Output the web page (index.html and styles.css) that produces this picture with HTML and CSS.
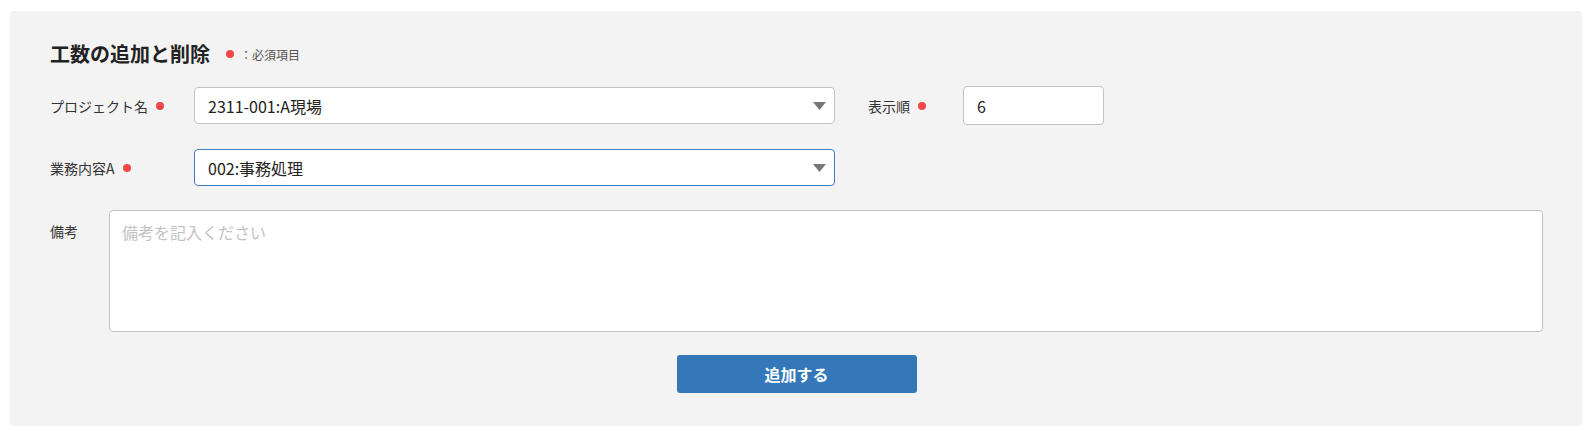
FILE: index.html
```html
<!DOCTYPE html>
<html lang="ja">
<head>
<meta charset="utf-8">
<title>工数の追加と削除</title>
<link rel="stylesheet" href="styles.css">
</head>
<body>
<section class="panel">
  <div class="title-row">
    <h2 class="title">工数の追加と削除</h2>
    <span class="dot dot-title"></span>
    <span class="legend">：必須項目</span>
  </div>

  <div class="row row-1">
    <label class="label label-main">プロジェクト名<span class="dot"></span></label>
    <div class="select-wrap">
      <select class="select">
        <option>2311-001:A現場</option>
      </select>
      <svg class="arrow" width="13" height="8" viewBox="0 0 13 8"><polygon points="0,0 13,0 6.5,8" fill="#777"/></svg>
    </div>
    <label class="label label-order">表示順<span class="dot"></span></label>
    <input class="input" type="text" value="6">
  </div>

  <div class="row row-2">
    <label class="label label-main">業務内容A<span class="dot"></span></label>
    <div class="select-wrap">
      <select class="select select-focus">
        <option>002:事務処理</option>
      </select>
      <svg class="arrow" width="13" height="8" viewBox="0 0 13 8"><polygon points="0,0 13,0 6.5,8" fill="#777"/></svg>
    </div>
  </div>

  <div class="row row-3">
    <label class="label label-note">備考</label>
    <textarea class="textarea" placeholder="備考を記入ください"></textarea>
  </div>

  <div class="actions">
    <button class="button" type="button">追加する</button>
  </div>
</section>
</body>
</html>
```

FILE: styles.css
```css
* { box-sizing: border-box; }

html, body {
  margin: 0;
  padding: 0;
  background: #ffffff;
}

body {
  padding: 11px 14px 22px 10px;
  font-family: "Noto Sans CJK JP", "Noto Sans", sans-serif;
  color: #333;
}

.panel {
  background: #f3f3f3;
  border-radius: 4px;
  padding: 29px 39px 33px 40px;
}

.title-row {
  display: flex;
  align-items: center;
  height: 28px;
}

.title {
  margin: 0;
  font-size: 20px;
  line-height: 28px;
  font-weight: 700;
  color: #222;
}

.dot {
  display: inline-block;
  width: 8px;
  height: 8px;
  border-radius: 50%;
  background: #f04848;
  margin-left: 8px;
  flex: none;
}

.dot-title {
  margin-left: 16px;
}

.legend {
  margin-left: 6px;
  font-size: 12px;
  color: #555;
  line-height: 16px;
  padding-top: 1px;
}

.row {
  display: flex;
}

.row-1 {
  margin-top: 18px;
  height: 39px;
  align-items: center;
}

.row-2 {
  margin-top: 24px;
  height: 37px;
  align-items: center;
}

.row-3 {
  margin-top: 24px;
  align-items: flex-start;
}

.label {
  display: flex;
  align-items: center;
  font-size: 14px;
  line-height: 20px;
  color: #333;
  flex: none;
}

.label-main {
  width: 144px;
}

.label-order {
  width: 95px;
  margin-left: 33px;
}

.label-note {
  width: 59px;
  padding-top: 11px;
}

.select-wrap {
  position: relative;
  width: 641px;
  height: 37px;
  flex: none;
}

.select {
  appearance: none;
  -webkit-appearance: none;
  width: 100%;
  height: 100%;
  margin: 0;
  padding: 0 30px 0 13px;
  border: 1px solid #c3c3c3;
  border-radius: 4px;
  background: #ffffff;
  font-family: inherit;
  font-size: 16px;
  color: #222;
  outline: none;
}

.select-focus {
  border-color: #3b7dc4;
}

.arrow {
  position: absolute;
  right: 9px;
  top: 15px;
  pointer-events: none;
}

.input {
  width: 141px;
  height: 39px;
  margin: 0;
  padding: 0 13px;
  border: 1px solid #c3c3c3;
  border-radius: 4px;
  background: #ffffff;
  font-family: inherit;
  font-size: 16px;
  color: #222;
  outline: none;
  flex: none;
}

.textarea {
  flex: 1;
  height: 122px;
  margin: 0;
  padding: 9px 12px;
  border: 1px solid #c3c3c3;
  border-radius: 4px;
  background: #ffffff;
  font-family: inherit;
  font-size: 16px;
  line-height: 24px;
  color: #222;
  resize: none;
  outline: none;
  display: block;
}

.textarea::placeholder {
  color: #c2c2c2;
}

.actions {
  display: flex;
  justify-content: center;
  margin-top: 23px;
}

.button {
  width: 240px;
  height: 38px;
  border: none;
  border-radius: 3px;
  background: #3478b9;
  color: #ffffff;
  font-family: inherit;
  font-size: 16px;
  font-weight: 700;
  line-height: 20px;
  cursor: pointer;
}
```
